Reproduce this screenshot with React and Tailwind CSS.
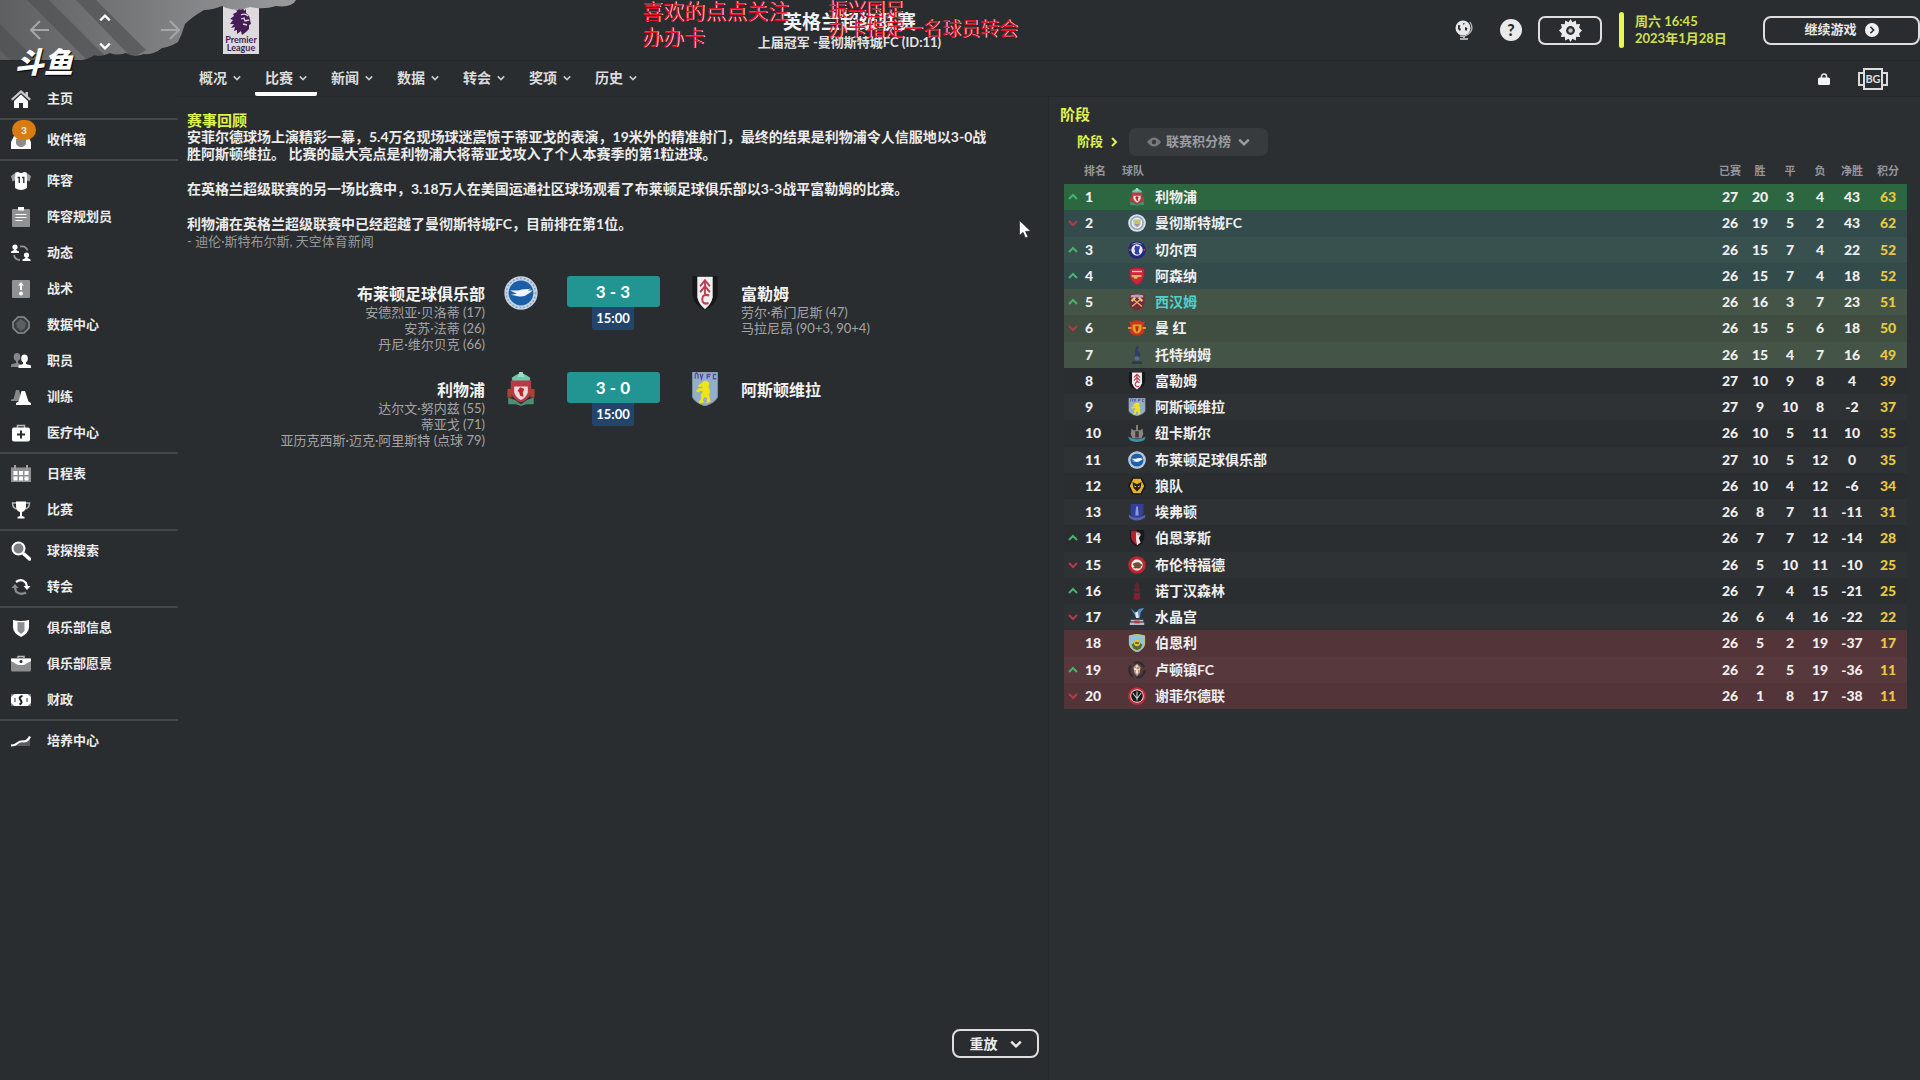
import { useState } from "react";

// --- 联赛积分榜数据 ---
// move: 排名变化, bg: 所在区域的行背景色
const TABLE = [
  { pos: 1, move: "up", club: "liverpool", name: "利物浦", stats: [27, 20, 3, 4, 43, 63], bg: "bg-[#2c6741]" },
  { pos: 2, move: "down", club: "city", name: "曼彻斯特城FC", stats: [26, 19, 5, 2, 43, 62], bg: "bg-[#334c4b]" },
  { pos: 3, move: "up", club: "chelsea", name: "切尔西", stats: [26, 15, 7, 4, 22, 52], bg: "bg-[#38514f]" },
  { pos: 4, move: "up", club: "arsenal", name: "阿森纳", stats: [26, 15, 7, 4, 18, 52], bg: "bg-[#334c4b]" },
  { pos: 5, move: "up", club: "westham", name: "西汉姆", stats: [26, 16, 3, 7, 23, 51], bg: "bg-[#445446]", own: true },
  { pos: 6, move: "down", club: "united", name: "曼 红", stats: [26, 15, 5, 6, 18, 50], bg: "bg-[#3f4e40]" },
  { pos: 7, club: "spurs", name: "托特纳姆", stats: [26, 15, 4, 7, 16, 49], bg: "bg-[#445446]" },
  { pos: 8, club: "fulham", name: "富勒姆", stats: [27, 10, 9, 8, 4, 39], bg: "bg-[#2b2e31]" },
  { pos: 9, club: "villa", name: "阿斯顿维拉", stats: [27, 9, 10, 8, -2, 37], bg: "bg-[#2f3235]" },
  { pos: 10, club: "newcastle", name: "纽卡斯尔", stats: [26, 10, 5, 11, 10, 35], bg: "bg-[#2b2e31]" },
  { pos: 11, club: "brighton", name: "布莱顿足球俱乐部", stats: [27, 10, 5, 12, 0, 35], bg: "bg-[#2f3235]" },
  { pos: 12, club: "wolves", name: "狼队", stats: [26, 10, 4, 12, -6, 34], bg: "bg-[#2b2e31]" },
  { pos: 13, club: "everton", name: "埃弗顿", stats: [26, 8, 7, 11, -11, 31], bg: "bg-[#2f3235]" },
  { pos: 14, move: "up", club: "bournemouth", name: "伯恩茅斯", stats: [26, 7, 7, 12, -14, 28], bg: "bg-[#2b2e31]" },
  { pos: 15, move: "down", club: "brentford", name: "布伦特福德", stats: [26, 5, 10, 11, -10, 25], bg: "bg-[#2f3235]" },
  { pos: 16, move: "up", club: "forest", name: "诺丁汉森林", stats: [26, 7, 4, 15, -21, 25], bg: "bg-[#2b2e31]" },
  { pos: 17, move: "down", club: "palace", name: "水晶宫", stats: [26, 6, 4, 16, -22, 22], bg: "bg-[#2f3235]" },
  { pos: 18, club: "burnley", name: "伯恩利", stats: [26, 5, 2, 19, -37, 17], bg: "bg-[#533439]" },
  { pos: 19, move: "up", club: "luton", name: "卢顿镇FC", stats: [26, 2, 5, 19, -36, 11], bg: "bg-[#57383d]" },
  { pos: 20, move: "down", club: "sheffield", name: "谢菲尔德联", stats: [26, 1, 8, 17, -38, 11], bg: "bg-[#533439]" },
];

const TABS = ["概况", "比赛", "新闻", "数据", "转会", "奖项", "历史"];

// 侧边栏分组, 每组之间有一条分隔线
const MENU = [
  [["home", "主页"]],
  [["inbox", "收件箱"]],
  [
    ["shirt", "阵容"],
    ["planner", "阵容规划员"],
    ["dynamics", "动态"],
    ["tactics", "战术"],
    ["data", "数据中心"],
    ["staff", "职员"],
    ["training", "训练"],
    ["medical", "医疗中心"],
  ],
  [["schedule", "日程表"], ["cup", "比赛"]],
  [["scout", "球探搜索"], ["transfer", "转会"]],
  [["club", "俱乐部信息"], ["vision", "俱乐部愿景"], ["finance", "财政"]],
  [["academy", "培养中心"]],
];

const MATCHES = [
  {
    home: "布莱顿足球俱乐部", homeClub: "brighton", away: "富勒姆", awayClub: "fulham", score: "3 - 3", time: "15:00",
    homeGoals: ["安德烈亚·贝洛蒂 (17)", "安苏·法蒂 (26)", "丹尼·维尔贝克 (66)"],
    awayGoals: ["劳尔·希门尼斯 (47)", "马拉尼昂 (90+3, 90+4)"],
  },
  {
    home: "利物浦", homeClub: "liverpool", away: "阿斯顿维拉", awayClub: "villa", score: "3 - 0", time: "15:00",
    homeGoals: ["达尔文·努内兹 (55)", "蒂亚戈 (71)", "亚历克西斯·迈克·阿里斯特 (点球 79)"],
    awayGoals: [],
  },
];

function Chevron({ dir = "down", className }) {
  const d = { down: "M1 3l4 4 4-4", up: "M1 7l4-4 4 4", right: "M3 1l4 4-4 4" }[dir];
  return (
    <svg viewBox="0 0 10 10" className={className} fill="none" stroke="currentColor" strokeWidth="2">
      <path d={d} />
    </svg>
  );
}

// --- 侧边栏图标 (白色 + 灰色双色调) ---
const MENU_ICONS = {
  home: (
    <g>
      <path d="M10 1L0 10l1.5 1.6L10 4l8.500 7.600L20 10l-3-2.700V3h-2.500v2z" fill="#c9cacb" />
      <path d="M10 5.500L3 12v7h5v-5h4v5h5v-7z" fill="#fff" />
    </g>
  ),
  inbox: (
    <g>
      <path d="M3 6h14l3 6v7H0v-7z" fill="#fff" />
      <path d="M5 9h10v4a5 4 0 0 1-10 0z" fill="#8b8d8f" />
    </g>
  ),
  shirt: (
    <g>
      <path d="M5 1.500L0 5l1.500 5.500L5 9zM15 1.500L20 5l-1.500 5.500L15 9z" fill="#9b9da0" />
      <path d="M4.500 1.500L7 1q3 2 6 0l2.500.500L16 7v10q-6 4-12 0V7z" fill="#fff" />
      <path d="M6.500 6.500h1.800V12M11 6.500h1.800V12" stroke="#303336" strokeWidth="1.400" fill="none" />
    </g>
  ),
  planner: (
    <g>
      <rect x="1" y="2" width="18" height="18" rx="1" fill="#8f9193" />
      <path d="M7 0h6v3.500H7z" fill="#fff" />
      <path d="M4.500 7.500h11M4.500 10.500h11M4.500 13.500h7" stroke="#fff" strokeWidth="1.200" />
    </g>
  ),
  dynamics: (
    <g>
      <circle cx="4" cy="4" r="2.600" fill="#fff" />
      <path d="M3 5h2v2l3 1.500V10H0V8.500L3 7z" fill="#fff" />
      <circle cx="15.500" cy="12" r="2.600" fill="#fff" />
      <path d="M14.500 13h2v2l3 1.500V18h-8v-1.500l3-1.500z" fill="#fff" />
      <path d="M9 3.500q6-1 7.500 4M3 12q1 5 6 5" stroke="#8f9193" strokeWidth="1.800" fill="none" />
    </g>
  ),
  tactics: (
    <g>
      <rect x="1" y="1" width="18" height="18" rx="1" fill="#8f9193" />
      <path d="M10 3l3 3.500h-2V11H9V6.500H7z" fill="#fff" />
      <circle cx="10" cy="14.500" r="2" fill="#fff" />
    </g>
  ),
  data: (
    <g>
      <path d="M7 2h6l5 5v6l-5 5H7l-5-5V7z" fill="#3b3e41" stroke="#8b8d8f" strokeWidth="1.500" />
      <path d="M10 4l5 4-1 5-4 3-4-4-1-4z" fill="#5d6063" />
    </g>
  ),
  staff: (
    <g>
      <ellipse cx="6" cy="6" rx="3.300" ry="4" fill="#85878a" />
      <path d="M5 9h2v3l3 1.500V16H0v-2.500L5 12z" fill="#85878a" />
      <ellipse cx="13.500" cy="7.500" rx="3.300" ry="4" fill="#fff" />
      <path d="M12 10h3v3l5 1.500V17H7.500v-2.500L12 13z" fill="#fff" />
    </g>
  ),
  training: (
    <g>
      <path d="M5 3h3l3 11H0v-1.500L2.500 12z" fill="#85878a" />
      <path d="M10.500 4h3.500l3.500 10.500L20 16v2H5v-2l2.500-1.500z" fill="#fff" />
    </g>
  ),
  medical: (
    <g>
      <path d="M6.500 5V2.500h7V5" stroke="#b9babc" strokeWidth="1.500" fill="none" />
      <rect x="1" y="4.500" width="18" height="14" rx="2" fill="#fff" />
      <path d="M10 7.500v8M6 11.500h8" stroke="#2a2d30" strokeWidth="2" />
    </g>
  ),
  schedule: (
    <g>
      <path d="M0 3.500h20V18H0z" fill="#8f9193" />
      <path d="M4 1v4M16 1v4" stroke="#9fa1a3" strokeWidth="2" />
      <path d="M2.500 7h4v4h-4zM8 7h4v4H8zM13.500 7h4v4h-4zM2.500 12.500h4v4h-4zM8 12.500h4v4H8zM13.500 12.500h4v4h-4z" fill="#fff" />
    </g>
  ),
  cup: (
    <g>
      <path d="M5 3H1.500q0 5.500 5 6M15 3h3.500q0 5.500-5 6" stroke="#b5b6b8" strokeWidth="1.500" fill="none" />
      <path d="M5 1.500h10V6q0 5-4 6v4l2.500 1v1.500h-7V17L9 16v-4Q5 11 5 6z" fill="#fff" />
    </g>
  ),
  scout: (
    <g>
      <circle cx="7.500" cy="7.500" r="6" fill="#7d7f82" stroke="#fff" strokeWidth="2" />
      <path d="M13 13l5.500 5" stroke="#fff" strokeWidth="3.500" strokeLinecap="round" />
    </g>
  ),
  transfer: (
    <g fill="none" strokeWidth="2.200">
      <path d="M5 5q5.500-4 10 1l1 4" stroke="#fff" />
      <path d="M12.500 9h7L16 13z" fill="#fff" />
      <path d="M15 15.500q-5.500 3-10-1l-1-4" stroke="#8b8d8f" />
      <path d="M.5 11h7L4 7z" fill="#8b8d8f" />
    </g>
  ),
  club: (
    <g>
      <path d="M2 2q8 2 16 0v7q0 6-8 10Q2 15 2 9z" fill="#fff" />
      <path d="M6.500 4q3.500.500 7 0v9l-3.500 3-3.500-3z" fill="#8b8d8f" />
    </g>
  ),
  vision: (
    <g>
      <path d="M7 4V2.500h6V4" stroke="#b9babc" strokeWidth="1.500" fill="none" />
      <rect x="0" y="4.500" width="20" height="13" rx="1.500" fill="#8b8d8f" />
      <path d="M0 4.500h20V7l-7 4H7L0 7z" fill="#fff" />
      <circle cx="10" cy="7.500" r="1.500" fill="#2a2d30" />
    </g>
  ),
  finance: (
    <g>
      <rect x="0" y="4" width="20" height="12" fill="#fff" />
      <path d="M0 4h3.500L0 7zM20 4v3l-3.500-3zM0 16v-3l3.500 3zM20 16h-3.500l3.500-3z" fill="#77797c" />
      <path d="M11.500 6Q7 7 9.500 10t-1 4.500" stroke="#1f2123" strokeWidth="2" fill="none" />
      <path d="M4 8v4M16 8v4" stroke="#77797c" strokeWidth="1.500" />
    </g>
  ),
  academy: (
    <g>
      <path d="M0 14h6l5-4 3-.500L19 6v9H3z" fill="#5a5c5f" />
      <path d="M0 14.500q4 0 6-2 3-3 7-2 4-.500 6-5" stroke="#fff" strokeWidth="2.200" fill="none" />
    </g>
  ),
};

// --- 球队队徽 ---
const CRESTS = {
  liverpool: (
    <g>
      <path d="M4.500 3.500q5.500-5 11 0L15 5.500H5z" fill="#6fc9a9" />
      <path d="M9 0h2l1 3H8z" fill="#9adfc6" />
      <path d="M4 5h12v7q-1 4-6 6-5-2-6-6z" fill="#b93a46" />
      <path d="M6 8.500h8V12q-1 3-4 4.500Q7 15 6 12z" fill="#ecd9d9" />
      <path d="M9.500 9l2.500 1-1 2 .500 2.500-2-.500-.500-2-1-1z" fill="#c2202f" />
      <path d="M2 10h2.500v5H2zM15.500 10H18v5h-2.500z" fill="#a9452f" />
      <path d="M2.500 15l4 1.500L10 19l3.500-2.500 4-1.500v4H13l-3 1-3-1H2.500z" fill="#4b8f74" />
    </g>
  ),
  city: (
    <g>
      <circle cx="10" cy="10" r="9.800" fill="#d9e2ea" />
      <circle cx="10" cy="10" r="7.800" fill="#8fa6b8" />
      <circle cx="10" cy="10" r="6" fill="#eef1f3" />
      <path d="M6 6h8v5q-1 3-4 4-3-1-4-4z" fill="#9cc0dc" />
      <path d="M7 7h6v3H7z" fill="#e0ba52" />
      <path d="M7 11h6l-3 3z" fill="#b88c72" />
    </g>
  ),
  chelsea: (
    <g>
      <circle cx="10" cy="10" r="9.800" fill="#25277f" />
      <circle cx="10" cy="10" r="6.300" fill="#e9e9f3" />
      <path d="M8 5l3 1 2-1v3l-1 3 1 4H9l-2-2 1-2-1-2z" fill="#2e41a5" />
      <circle cx="2" cy="10" r="1" fill="#d2454f" />
      <circle cx="18" cy="10" r="1" fill="#d2454f" />
      <path d="M5 3.500q5-3 10 0" stroke="#b7b8dd" fill="none" />
    </g>
  ),
  arsenal: (
    <g>
      <path d="M2 2q8-3 16 0v8q-1 6-8 10Q3 16 2 10z" fill="#cf2638" stroke="#8e2233" />
      <path d="M4.500 5h11" stroke="#f4d3d3" strokeWidth="1.500" />
      <path d="M4 9h11v2h-4l-1 2H7l-1-2H4z" fill="#dfb56c" />
    </g>
  ),
  westham: (
    <g>
      <path d="M1.500 2q8.500-2 17 0v9q-1 6-8.500 9Q2.500 17 1.500 11z" fill="#742a3d" />
      <path d="M3 2.500q7-1.500 14 0V5H3z" fill="#b7a0b0" />
      <path d="M4.500 15L14 7M15.500 15L6 7" stroke="#e3b25c" strokeWidth="1.500" />
      <path d="M4 9l4-4M16 9l-4-4" stroke="#e8c384" strokeWidth="2.500" />
    </g>
  ),
  united: (
    <g>
      <circle cx="10" cy="10" r="8.500" fill="#c7301f" />
      <path d="M1 3h18l-2 4H3zM1 13h18l-3 4H4z" fill="#cf3522" />
      <path d="M0 9h4v2H0zM16 9h4v2h-4z" fill="#cd9a2e" />
      <path d="M5 6h10v5q-1 4-5 5-4-1-5-5z" fill="#e7a023" />
      <path d="M8 8h4l-1 6H9z" fill="#a8351b" />
    </g>
  ),
  spurs: (
    <g fill="#323d66">
      <path d="M9 1l3-1-1 4 1 3 2 2-2 4H9L7.500 8z" />
      <circle cx="10" cy="14" r="2.500" fill="#5a6a92" />
      <path d="M5 17h10l1 3H4z" fill="#2c3a4d" />
    </g>
  ),
  fulham: (
    <g>
      <path d="M1 0h18v11q-1 6-9 9-8-3-9-9z" fill="#17181a" />
      <path d="M4.500 .5h11v12q-1 4-5.500 7-4.500-3-5.500-7z" fill="#f1f0f0" />
      <path d="M6.500 6l3.500-3.500L13.500 6M6.500 9.500L10 6l3.500 3.500M10 3v8M13 11.500q-4.500-1.500-5 2 0 3.500 4.500 2.500" fill="none" stroke="#bf3c55" strokeWidth="1.300" />
    </g>
  ),
  villa: (
    <g>
      <path d="M1 0h18v14.500q-1 3-9 5.500-8-2.500-9-5.500z" fill="#93afc8" stroke="#7c94a8" strokeWidth=".6" />
      <path d="M3 4V1.500l1-1 1 1V4M6.500 1L7.500 4l1-3M14 1.500h-2.500V4M11.500 2.700h2M18 1.500h-2V4h2" stroke="#5c4b9c" strokeWidth=".9" fill="none" />
      <path d="M9 5.500l2-.500 2 1.500-.500 2.500 1 2-.500 2.500 1 4-3 1 .500-3-1.500-1-1.500 1.500.500 2-3 .500-.500-1.500 1.500-.500v-3l1.500-2-1.500-.500-2 1-1.500-1 2-1.500H8V8.500L6 9l-1-1 2.500-1.500z" fill="#f1e319" />
    </g>
  ),
  newcastle: (
    <g>
      <path d="M9 1h2v6h3l2-2 1 6-2 5H5l-2-5 1-6 2 2h3z" fill="#8c8582" />
      <path d="M8 8h4v7H8z" fill="#3c3b3b" />
      <path d="M0 14q10 6 20 0l-2 4q-8 4-16 0z" fill="#3f93a6" />
    </g>
  ),
  brighton: (
    <g>
      <circle cx="10" cy="10" r="9.800" fill="#c9d6e4" />
      <circle cx="10" cy="10" r="8.600" fill="none" stroke="#8ea9c6" strokeWidth="1" strokeDasharray="1.200 1" />
      <circle cx="10" cy="10" r="7.300" fill="#1c5fa9" />
      <path d="M3.500 8.500h5l2-.500 5.500-.500-2 1h3l-2 1.500q-3 2.500-6 2L4 11l3.500-.500z" fill="#f3f7fb" />
    </g>
  ),
  wolves: (
    <g>
      <path d="M5 .5h10L20 10l-5 9.500H5L0 10z" fill="#17150e" />
      <path d="M6 2h8l4 8-4 8H6l-4-8z" fill="#e5b12f" />
      <path d="M5 5.500l5 2.500 5-2.500-1 6.500-4 4-4-4z" fill="#242016" />
      <path d="M7 10l2 1M13 10l-2 1" stroke="#f2e7c4" />
    </g>
  ),
  everton: (
    <g>
      <path d="M3 1h14v11q-1 4-7 6.500Q4 16 3 12z" fill="#33409a" />
      <path d="M9 4h2l1 10H8z" fill="#8d97d6" />
      <path d="M1 13q9 7 18 0v3q-9 7-18 0z" fill="#5563b4" />
    </g>
  ),
  bournemouth: (
    <g>
      <path d="M2 1h16v9q-1 6-8 10-7-4-8-10z" fill="#1a1718" />
      <path d="M3.500 2H10v16q-6-4-6.500-9z" fill="#b3202e" />
      <path d="M9 4q5-1 5 3l-2 3 2 5-4 3-1-6z" fill="#f0e8e8" />
      <circle cx="12" cy="5.500" r="1.700" fill="#a9a4a4" />
    </g>
  ),
  brentford: (
    <g>
      <circle cx="10" cy="10" r="9.800" fill="#c3222f" />
      <circle cx="10" cy="10" r="6.300" fill="#f2eeea" />
      <path d="M5 9l4-2h3l4 3-3 3H8z" fill="#6a5330" />
      <path d="M6 13h8" stroke="#c3222f" strokeWidth="1.500" />
    </g>
  ),
  forest: (
    <g fill="#7c2230">
      <path d="M10 0l3 4-1 2 2 3-2 2h-4l-2-2 2-3-1-2z" opacity=".7" />
      <path d="M6 12h8l-1 3 1 4-4 1-4-1 1-4z" />
    </g>
  ),
  palace: (
    <g>
      <path d="M3 0l5 5 2-1 2-3 6-1-4 5-1 6h-4L7 7z" fill="#4f93d2" />
      <path d="M8 5l3-1 1 7H9z" fill="#dfe9f3" />
      <path d="M3 13h14v2H3zM2 16h16v3H2z" fill="#b4bac8" />
      <path d="M7 14h6v3H7z" fill="#b63444" />
    </g>
  ),
  burnley: (
    <g>
      <path d="M1.500 2q8.500-3 17 0v9q-1 6-8.500 9Q2.500 17 1.500 11z" fill="#8ec6dc" stroke="#c9cf5c" />
      <path d="M4 12l6-5 6 5-2 4-4 2-4-2z" fill="#59682d" />
      <circle cx="10" cy="10" r="3.500" fill="#dfc233" />
      <path d="M8 10h4" stroke="#463a18" strokeWidth="1.500" />
    </g>
  ),
  luton: (
    <g>
      <circle cx="10" cy="10" r="8.500" fill="none" stroke="#2c2c35" strokeWidth="2.500" strokeDasharray="14 4" />
      <path d="M10 3l4 4-1 6-3 4-3-4-1-6z" fill="#b9a08c" />
      <path d="M10 5v9M7 9h6" stroke="#f1ece2" strokeWidth="2" />
      <circle cx="11" cy="8" r="1.500" fill="#d98340" />
    </g>
  ),
  sheffield: (
    <g>
      <circle cx="10" cy="10" r="9.800" fill="#ca2b3a" />
      <circle cx="10" cy="10" r="7.500" fill="#e9e4e4" />
      <circle cx="10" cy="10" r="6.500" fill="#171515" />
      <path d="M5.500 7l4.500 6 4.500-6M10 5v10" stroke="#d5d5d5" strokeWidth="1.200" fill="none" />
    </g>
  ),
};

function Crest({ club, className }) {
  return (
    <svg viewBox="0 0 20 20" className={className}>
      {CRESTS[club]}
    </svg>
  );
}

// --- 顶栏 ---
function Header() {
  return (
    <header className="relative flex h-[61px] shrink-0 items-center border-b border-[#25282a]">
      {/* 左上角的云状装饰 */}
      <svg viewBox="0 0 300 62" className="absolute top-0 left-0 h-[62px] w-[300px]">
        <defs>
          <linearGradient id="cloud" x1="0" x2="1">
            <stop offset="0" stopColor="#5e5f60" />
            <stop offset=".45" stopColor="#78797a" />
            <stop offset="1" stopColor="#9a9b9c" />
          </linearGradient>
          <clipPath id="cloudClip">
            <path d="M0 0H296Q292 8 276 6q-12 4-26 1-14 6-28-1-10 4-18 4-12 7-19 14-3 10-7 18-8 5-16 6-8 7-18 6-10 4-18-1-10 3-16 0-8 4-16 2-8 6-16 5H0z" />
          </clipPath>
        </defs>
        <g clipPath="url(#cloudClip)">
          <path d="M0 0h300v62H0z" fill="url(#cloud)" />
          <path d="M27 0h22l62 62H89zM76 0h20l50 50-14 8zM0 24l38 38H12L0 50z" fill="#4f5051" opacity=".65" />
        </g>
      </svg>

      <nav className="relative flex w-[223px] shrink-0 items-center pl-[30px]">
        <button type="button" aria-label="后退" className="text-[#a5a6a7]">
          <svg viewBox="0 0 20 20" className="size-5" fill="none" stroke="currentColor" strokeWidth="2">
            <path d="M10 1L1 10l9 9M1 10h18" />
          </svg>
        </button>
        <div className="ml-[49px] flex flex-col gap-4 pt-1 text-white">
          <button type="button" aria-label="上一个"><Chevron dir="up" className="block size-3" /></button>
          <button type="button" aria-label="下一个"><Chevron className="block size-3" /></button>
        </div>
        <button type="button" aria-label="前进" className="ml-[49px] text-[#a5a6a7]">
          <svg viewBox="0 0 20 20" className="size-5" fill="none" stroke="currentColor" strokeWidth="2">
            <path d="M10 1l9 9-9 9M19 10H1" />
          </svg>
        </button>
      </nav>

      {/* 英超联赛标志 */}
      <div className="flex h-12 w-9 shrink-0 flex-col items-center bg-[#dcdadd] text-[#451c55]">
        <svg viewBox="0 0 24 28" className="h-[30px] w-6" fill="currentColor">
          <path d="M6 1l2 3 2-4 2 3 2-3 1 4 2-2v4q4 3 4 7l1 4-2 1v4l-3 3-4 3-1-4-4 3 0-4-3 1 1-4-4 1 3-4-4 0 3-4-3-1 4-3-1-2 4-2z" />
          <path d="M12 8q4-2 7 1M12 12l3-1 1 3 4-1M14 17l4 1" stroke="#dcdadd" strokeWidth="1.300" fill="none" />
        </svg>
        <span className="text-[9px] leading-[8px] font-bold">Premier</span>
        <span className="text-[9px] leading-[8px] font-bold">League</span>
      </div>

      <div className="flex-1 pt-0.5 text-center">
        <h1 className="text-[19px] leading-[22px] font-bold text-[#f2f2f2]">英格兰超级联赛</h1>
        <p className="text-[13px] leading-[18px] font-bold text-[#e4e4e4]">上届冠军 -曼彻斯特城FC (ID:11)</p>
      </div>

      <div className="flex shrink-0 items-center pl-[15px]">
        <button type="button" aria-label="世界">
          <svg viewBox="0 0 18 20" className="h-5 w-[18px]">
            <circle cx="8" cy="8" r="7.500" fill="#e9e9e9" />
            <path d="M15 2q5 8-3 13-3 2-7 1" stroke="#b9babb" strokeWidth="1.300" fill="none" />
            <path d="M9 16v2M5 19h8" stroke="#d6d6d6" strokeWidth="1.500" />
            <path d="M3 5l2.500.500-1 2 1.500 1.500-1 2-2-2zM8 3l2 .500-1.500 1.500zM10 7l2.500 1-1 3-1.500-1z" fill="#2a2d30" />
          </svg>
        </button>
        <button type="button" aria-label="帮助" className="ml-[27px] size-[22px] rounded-full bg-[#eaeaea] text-base leading-[22px] font-black text-[#2a2d30]">
          ?
        </button>
        <button type="button" aria-label="设置" className="ml-4 flex h-[29px] w-16 items-center justify-center rounded-[7px] border-2 border-[#dededf]">
          <svg viewBox="0 0 24 24" className="size-[23px]">
            <path
              d="M12 0l2 3.500 3.500-2 .500 4 4-.200-1 3.700L24 12l-3 3 1 3.700-4-.200-.500 4-3.500-2L12 24l-2-3.500-3.500 2-.500-4-4 .200 1-3.700L0 12l3-3-1-3.700 4 .200.500-4 3.500 2z"
              fill="#ececec"
            />
            <circle cx="12" cy="12" r="4.600" fill="#2a2d30" />
            <circle cx="12" cy="12" r="2.300" fill="#bfc0c1" />
          </svg>
        </button>
        <div className="ml-[17px] h-9 w-[5px] rounded-full bg-[#e6f94f]" />
        <div className="w-[139px] pl-[11px] text-[13px] leading-[17px] font-bold text-[#cfe052]">
          <p>周六 16:45</p>
          <p>2023年1月28日</p>
        </div>
        <button type="button" className="flex h-[29px] w-[157px] items-center justify-center gap-2 rounded-[8px] border-2 border-[#dededf] text-[13px] font-bold text-[#e8e8e8]">
          继续游戏
          <span className="flex size-3.5 items-center justify-center rounded-full bg-[#f0f0f0] text-[#2a2d30]">
            <Chevron dir="right" className="size-2" />
          </span>
        </button>
      </div>
    </header>
  );
}

// --- 左侧菜单 ---
function Sidebar() {
  return (
    <aside className="w-[178px] shrink-0 pt-[18px]">
      {MENU.map((group, i) => (
        <ul key={i} className={`pt-0.5 pb-px ${i > 0 ? "border-t-2 border-[#44474a]" : ""}`}>
          {group.map(([icon, label]) => (
            <li key={label}>
              <a href="#" className="relative flex h-9 items-center gap-4 pl-[11px] text-[13px] font-bold text-[#ececec]">
                <svg viewBox="0 0 20 20" className="size-5">{MENU_ICONS[icon]}</svg>
                {label}
                {icon === "inbox" && (
                  <span className="absolute -top-0.5 left-3 flex h-5 w-6 items-center justify-center rounded-full bg-[#d87b10] text-[10px] text-white">
                    3
                  </span>
                )}
              </a>
            </li>
          ))}
        </ul>
      ))}
    </aside>
  );
}

// --- 二级标签栏 ---
function TabBar() {
  const [active, setActive] = useState("比赛");
  return (
    <div className="flex h-9 shrink-0 items-stretch border-b border-[#26292b] pl-[11px]">
      <nav className="flex gap-1">
        {TABS.map((tab) => (
          <button
            key={tab}
            type="button"
            onClick={() => setActive(tab)}
            className={`flex w-[62px] items-center justify-center gap-1.5 rounded-[2px] border-b-4 pt-0.5 text-sm font-bold text-[#dcdcdc] ${
              active === tab ? "border-white" : "border-transparent"
            }`}
          >
            {tab}
            <Chevron className="size-2 text-[#c9cacb]" />
          </button>
        ))}
      </nav>
      <div className="ml-auto flex items-center gap-7 pr-8">
        <button type="button" aria-label="锁定">
          <svg viewBox="0 0 12 12" className="size-3">
            <path d="M3.500 6V3.500a2.500 2.500 0 0 1 5 0V6" stroke="#e8e8e8" strokeWidth="1.500" fill="none" />
            <rect x="0" y="4.500" width="12" height="7.500" rx="1.500" fill="#f3f3f3" />
          </svg>
        </button>
        <button type="button" className="flex items-center text-[#dcdcdc]">
          <span className="h-3.5 w-[5px] border-2 border-r-0 border-current" />
          <span className="flex h-[22px] w-5 items-center justify-center border-2 border-current text-[11px] leading-none font-bold">
            BG
          </span>
          <span className="h-3.5 w-[5px] border-2 border-l-0 border-current" />
        </button>
      </div>
    </div>
  );
}

function Goals({ list }) {
  return (
    <ul className="text-[13px] leading-4 text-[#a2a4a6]">
      {list.map((g) => (
        <li key={g}>{g}</li>
      ))}
    </ul>
  );
}

function Match({ match }) {
  return (
    <div className="grid min-h-[96px] grid-cols-[1fr_72px_112px_72px_1fr] items-start">
      <div className="pt-2 text-right">
        <h3 className="text-base leading-5 font-bold text-[#f2f2f2]">{match.home}</h3>
        <Goals list={match.homeGoals} />
      </div>
      <Crest club={match.homeClub} className="mx-auto size-[34px]" />
      <div className="flex flex-col items-center font-bold text-white">
        <div className="flex h-[31px] w-[93px] items-center justify-center rounded-[3px] bg-[#229593] text-[17px]">{match.score}</div>
        <div className="flex h-[23px] w-[42px] items-center justify-center rounded-b-[3px] bg-[#24446c] text-[13px]">{match.time}</div>
      </div>
      <svg viewBox="0 0 20 20" preserveAspectRatio="none" className="mx-auto h-[34px] w-7">
        {CRESTS[match.awayClub]}
      </svg>
      <div className="pt-2">
        <h3 className="text-base leading-5 font-bold text-[#f2f2f2]">{match.away}</h3>
        <Goals list={match.awayGoals} />
      </div>
    </div>
  );
}

// --- 赛事回顾 ---
function Recap() {
  return (
    <section className="flex flex-col border-r border-[#26292b] pt-[15px] pr-[9px] pb-[22px] pl-[9px]">
      <h2 className="text-[15px] leading-4 font-bold text-[#e0f24e]">赛事回顾</h2>
      <div className="flex flex-col gap-[18px] text-sm leading-[17px] font-bold text-[#ebebeb]">
        <p>
          安菲尔德球场上演精彩一幕，5.4万名现场球迷震惊于蒂亚戈的表演，19米外的精准射门，最终的结果是利物浦令人信服地以3-0战
          <br />
          胜阿斯顿维拉。 比赛的最大亮点是利物浦大将蒂亚戈攻入了个人本赛季的第1粒进球。
        </p>
        <p>在英格兰超级联赛的另一场比赛中，3.18万人在美国运通社区球场观看了布莱顿足球俱乐部以3-3战平富勒姆的比赛。</p>
        <p>利物浦在英格兰超级联赛中已经超越了曼彻斯特城FC，目前排在第1位。</p>
      </div>
      <p className="text-[13px] leading-[18px] text-[#97999b]">- 迪伦·斯特布尔斯, 天空体育新闻</p>

      <div className="mt-[26px]">
        {MATCHES.map((m) => (
          <Match key={m.home} match={m} />
        ))}
      </div>

      <button type="button" className="mt-auto flex h-[29px] w-[87px] items-center justify-center gap-3 self-end rounded-[8px] border-2 border-[#dededf] text-sm font-bold text-[#ededed]">
        重放
        <Chevron className="size-3" />
      </button>
    </section>
  );
}

// --- 积分榜 ---
function Standings() {
  return (
    <section className="bg-[#2c2f32] pt-[7px] pr-[13px] pl-[15px]">
      <h2 className="-ml-1 text-[15px] leading-5 font-bold text-[#e0f24e]">阶段</h2>
      <div className="mt-1 flex items-center pl-[13px]">
        <label htmlFor="stage" className="text-[13px] font-bold text-[#e0f24e]">阶段</label>
        <Chevron dir="right" className="ml-1.5 size-2.5 text-[#e0f24e]" />
        <div className="ml-2.5 flex h-7 w-[139px] items-center rounded-[7px] bg-[#383b3e] pl-[18px] text-[#9a9c9e]">
          <svg viewBox="0 0 14 10" className="h-2.5 w-3.5">
            <path d="M0 5q7-9 14 0-7 9-14 0z" fill="#77797c" />
            <circle cx="7" cy="5" r="2.200" fill="#383b3e" />
          </svg>
          <select id="stage" className="ml-[5px] w-[72px] appearance-none bg-transparent text-[13px] font-bold outline-none">
            <option>联赛积分榜</option>
          </select>
          <Chevron className="size-3" />
        </div>
      </div>

      <table className="mt-0.5 h-[551px] w-full table-fixed border-collapse text-sm font-bold text-[#efefef]">
        <colgroup>
          <col className="w-[18px]" />
          <col className="w-[40px]" />
          <col className="w-[32px]" />
          <col />
          <col className="w-[30px]" />
          <col className="w-[30px]" />
          <col className="w-[30px]" />
          <col className="w-[30px]" />
          <col className="w-[34px]" />
          <col className="w-[38px]" />
        </colgroup>
        <thead className="text-[11px] text-[#94969a]">
          <tr className="h-[26px]">
            <th />
            <th className="pl-0.5 text-left font-bold">排名</th>
            <th colSpan={2} className="text-left font-bold">球队</th>
            {["已赛", "胜", "平", "负", "净胜", "积分"].map((h) => (
              <th key={h} className="font-bold">{h}</th>
            ))}
          </tr>
        </thead>
        <tbody>
          {TABLE.map((row) => (
            <tr key={row.pos} className={`h-[26px] ${row.bg}`}>
              <td>
                {row.move && (
                  <Chevron dir={row.move} className={`ml-1 size-2.5 ${row.move === "up" ? "text-[#45b36b]" : "text-[#b33a4c]"}`} />
                )}
              </td>
              <td className="pl-[3px] font-black">{row.pos}</td>
              <td>
                <Crest club={row.club} className="ml-1.5 size-[18px]" />
              </td>
              <td className={row.own ? "pl-px text-[#4fcfd0]" : "pl-px"}>{row.name}</td>
              {row.stats.map((n, i) => (
                <td key={i} className={`text-center font-black ${i === 5 ? "text-[#ecc83f]" : ""}`}>{n}</td>
              ))}
            </tr>
          ))}
        </tbody>
      </table>
    </section>
  );
}

// --- 直播画面上的浮层: 弹幕、水印与鼠标指针 ---
function StreamOverlay() {
  return (
    <div className="pointer-events-none absolute inset-0">
      <p className="absolute top-[49px] left-[15px] text-[29px] leading-[26px] font-black text-white italic [text-shadow:1px_1px_1px_#000]">斗鱼</p>
      <div className="absolute top-0 left-[642px] flex flex-col gap-1 text-[21px] leading-[22px] text-[#e0122c] [text-shadow:1px_0_0_#f6ccd2]">
        <p>喜欢的点点关注</p>
        <p>办办卡</p>
      </div>
      <div className="absolute top-0 left-[828px] text-[19px] leading-[19px] text-[#e0122c] [text-shadow:1px_0_0_#f6ccd2]">
        <p>振兴国足</p>
        <p>办卡指定一名球员转会</p>
      </div>
      <svg viewBox="0 0 12 19" className="absolute top-[220px] left-[1019px] h-[19px] w-3">
        <path d="M.5.5v15l3.500-3.200 2.500 5.700 2.500-1.200L6.500 11.500l5-.500z" fill="#fff" stroke="#1b1c1e" strokeWidth=".6" />
      </svg>
    </div>
  );
}

export default function App() {
  return (
    <div className="relative flex min-h-screen flex-col overflow-hidden bg-[#2a2d30] font-['Lato','Noto_Sans_CJK_SC',sans-serif]">
      <Header />
      <div className="flex flex-1">
        <Sidebar />
        <main className="flex min-w-0 flex-1 flex-col">
          <TabBar />
          <div className="grid flex-1 grid-cols-2">
            <Recap />
            <Standings />
          </div>
        </main>
      </div>
      <StreamOverlay />
    </div>
  );
}
